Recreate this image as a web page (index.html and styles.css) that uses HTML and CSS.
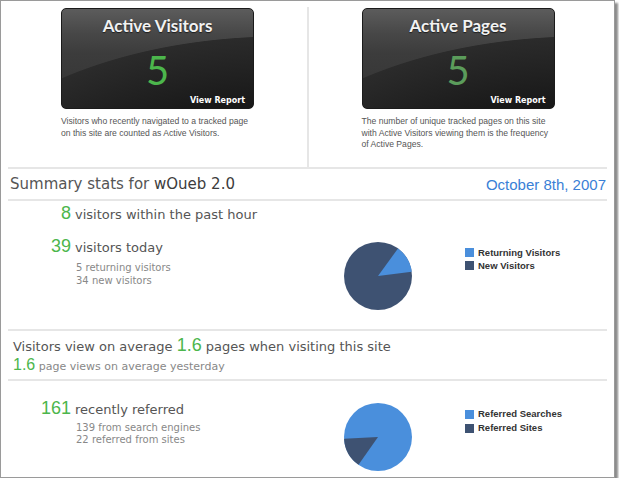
FILE: index.html
```html
<!DOCTYPE html>
<html lang="en">
<head>
    <meta charset="UTF-8">
    <title>Summary stats for wOueb 2.0</title>
    <link rel="stylesheet" href="styles.css">
</head>
<body>
    <div class="frame">
        <section class="top">
            <div class="top-col">
                <div class="panel">
                    <div class="card card-visitors">
                        <div class="card-title">Active Visitors</div>
                        <div class="card-value">5</div>
                        <a class="card-link" href="#">View Report</a>
                    </div>
                    <p class="card-desc">Visitors who recently navigated to a tracked page on this site are counted as Active Visitors.</p>
                </div>
            </div>
            <div class="top-col top-col-right">
                <div class="panel">
                    <div class="card card-pages">
                        <div class="card-title">Active Pages</div>
                        <div class="card-value">5</div>
                        <a class="card-link" href="#">View Report</a>
                    </div>
                    <p class="card-desc">The number of unique tracked pages on this site with Active Visitors viewing them is the frequency of Active Pages.</p>
                </div>
            </div>
        </section>

        <header class="summary-head">
            <h2>Summary stats for <b>wOueb 2.0</b></h2>
            <span class="summary-date">October 8th, 2007</span>
        </header>

        <section class="stats stats-visitors">
            <div class="stats-text">
                <div class="stat-row"><span class="num">8</span><span class="label">visitors within the past hour</span></div>
                <div class="stat-row stat-row-gap"><span class="num">39</span><span class="label">visitors today</span></div>
                <ul class="sub">
                    <li>5 returning visitors</li>
                    <li>34 new visitors</li>
                </ul>
            </div>
            <svg class="pie pie-visitors" width="68" height="68" viewBox="0 0 68 68">
                <circle cx="34" cy="34" r="34" fill="#3e5272"/>
                <path d="M34 34 L53.98 6.49 A34 34 0 0 1 67.75 29.86 Z" fill="#4a8fdc"/>
            </svg>
            <ul class="legend legend-visitors">
                <li><span class="swatch swatch-light"></span>Returning Visitors</li>
                <li><span class="swatch swatch-dark"></span>New Visitors</li>
            </ul>
        </section>

        <section class="stats-avg">
            <p class="avg-main">Visitors view on average <span class="num-inline">1.6</span> pages when visiting this site</p>
            <p class="avg-sub"><span class="num-small">1.6</span> page views on average yesterday</p>
        </section>

        <section class="stats stats-referred">
            <div class="stats-text">
                <div class="stat-row"><span class="num">161</span><span class="label">recently referred</span></div>
                <ul class="sub sub-tight">
                    <li>139 from search engines</li>
                    <li>22 referred from sites</li>
                </ul>
            </div>
            <svg class="pie pie-referred" width="68" height="68" viewBox="0 0 68 68">
                <circle cx="34" cy="34" r="34" fill="#4a8fdc"/>
                <path d="M34 34 L14.5 61.85 A34 34 0 0 1 0.05 35.78 Z" fill="#3e5272"/>
            </svg>
            <ul class="legend legend-referred">
                <li><span class="swatch swatch-light"></span>Referred Searches</li>
                <li><span class="swatch swatch-dark"></span>Referred Sites</li>
            </ul>
        </section>
    </div>
</body>
</html>
```

FILE: styles.css
```css
/* General */
body {
    margin: 0;
    background: #fff;
    font-family: 'DejaVu Sans', Verdana, sans-serif;
    color: #555;
}

.frame {
    width: 599px;
    height: 476px;
    padding: 0 7px;
    border: 1px solid #9a9a9a;
    box-shadow: 3px 3px 2px rgba(0, 0, 0, 0.45);
    overflow: hidden;
}

/* Active cards */
.top {
    display: grid;
    grid-template-columns: 299px 1fr;
    height: 168px;
    border-bottom: 2px solid #e6e6e6;
    box-sizing: border-box;
}

.top-col {
    padding-top: 6px;
    display: flex;
    justify-content: center;
}

.top-col-right {
    border-left: 2px solid #e6e6e6;
    margin-top: 6px;
    padding-top: 0;
}

.panel {
    width: 193px;
    padding-top: 1px;
}

.card {
    position: relative;
    height: 99px;
    border: 1px solid #1b1b1b;
    border-radius: 5px;
    background:
        radial-gradient(ellipse 360px 200px at 220px 227px, #121212 55%, #2b2b2b 99.6%, transparent 100%),
        linear-gradient(#5c5c5c, #474747 25%, #3c3c3c 45%, #333);
    text-align: center;
    color: #f2f2f2;
}

.card-title {
    font-family: Lato, 'Open Sans', sans-serif;
    font-weight: bold;
    font-size: 17px;
    line-height: 20px;
    padding-top: 7px;
    text-shadow: 0 1px 1px rgba(0, 0, 0, 0.6);
}

.card-value {
    font-family: Lato, 'Open Sans', sans-serif;
    font-size: 40px;
    line-height: 40px;
    margin-top: 14px;
}

.card-visitors .card-value {
    color: #4cb64c;
}

.card-pages .card-value {
    color: #5b9c5b;
}

.card-link {
    position: absolute;
    right: 8px;
    bottom: 3px;
    font-size: 8px;
    font-weight: bold;
    color: #fff;
    text-decoration: none;
}

.card-desc {
    margin: 7px 0 0;
    font-family: 'Liberation Sans', Arial, sans-serif;
    font-size: 8.6px;
    line-height: 11.5px;
    color: #555;
}

/* Summary header */
.summary-head {
    display: flex;
    justify-content: space-between;
    align-items: center;
    height: 32px;
    padding: 0 1px 0 2px;
    border-bottom: 2px solid #e6e6e6;
    box-sizing: border-box;
}

.summary-head h2 {
    margin: 0;
    font-size: 15px;
    font-weight: normal;
    color: #555;
}

.summary-head h2 b {
    font-weight: normal;
    color: #3c3c3c;
}

.summary-date {
    font-family: 'Liberation Sans', Arial, sans-serif;
    font-size: 15px;
    color: #3a80d6;
}

/* Stats blocks */
.stats {
    display: flex;
    align-items: flex-start;
}

.stats-visitors {
    height: 130px;
    border-bottom: 2px solid #e6e6e6;
    box-sizing: border-box;
}

.stats-text {
    width: 336px;
}

.stats-visitors .stats-text {
    padding-top: 2px;
}

.stats-referred .stats-text {
    padding-top: 17px;
}

.stat-row {
    display: flex;
    align-items: baseline;
    line-height: 20px;
    font-size: 13px;
    color: #555;
}

.stat-row-gap {
    margin-top: 11px;
}

.num {
    width: 63px;
    margin-right: 4px;
    text-align: right;
    font-family: 'Liberation Sans', Arial, sans-serif;
    font-size: 18px;
    color: #4cb64c;
}

.sub {
    list-style: none;
    margin: 3px 0 0 68px;
    padding: 0;
    font-size: 10px;
    line-height: 13px;
    color: #888;
}

.sub-tight {
    margin-top: 2px;
    line-height: 12px;
}

.pie-visitors {
    margin-top: 41px;
}

.pie-referred {
    margin-top: 22px;
}

.legend {
    list-style: none;
    margin: 0 0 0 53px;
    padding: 0;
    font-family: 'Liberation Sans', Arial, sans-serif;
    font-size: 9.5px;
    font-weight: bold;
    line-height: 13px;
    color: #333;
}

.legend-visitors {
    margin-top: 45px;
}

.legend-referred {
    margin-top: 26px;
    line-height: 14px;
}

.legend li {
    display: flex;
    align-items: center;
}

.swatch {
    width: 9px;
    height: 9px;
    margin-right: 4px;
}

.swatch-light {
    background: #4a8fdc;
}

.swatch-dark {
    background: #3e5272;
}

/* Average pages */
.stats-avg {
    height: 50px;
    padding: 4px 0 0 5px;
    border-bottom: 2px solid #e6e6e6;
    box-sizing: border-box;
}

.stats-avg p {
    margin: 0;
}

.avg-main {
    font-size: 13px;
    line-height: 20px;
}

.num-inline {
    font-family: 'Liberation Sans', Arial, sans-serif;
    font-size: 18px;
    color: #4cb64c;
}

.avg-sub {
    font-size: 11px;
    line-height: 16px;
    color: #888;
}

.num-small {
    font-family: 'Liberation Sans', Arial, sans-serif;
    font-size: 16px;
    color: #4cb64c;
}
```
